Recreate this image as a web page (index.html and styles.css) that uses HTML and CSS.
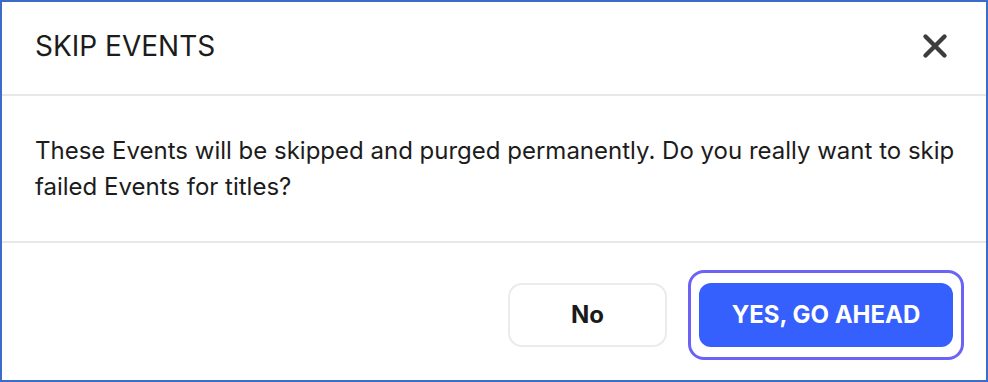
FILE: index.html
```html
<!DOCTYPE html>
<html>
<head>
<meta charset="utf-8">
<link rel="stylesheet" href="styles.css">
</head>
<body>
<div class="dialog">
  <div class="header">
    <h1 class="title">SKIP EVENTS</h1>
    <button class="close" aria-label="Close">
      <svg width="26" height="26" viewBox="0 0 26 26"><path d="M3.5 3.5 L22.5 22.5 M22.5 3.5 L3.5 22.5" stroke="#3d3d3d" stroke-width="4.4" stroke-linecap="round"/></svg>
    </button>
  </div>
  <div class="body">
    <p class="message">These Events will be skipped and purged permanently. Do you really want to skip failed Events for titles?</p>
  </div>
  <div class="footer">
    <button class="btn btn-no">No</button>
    <div class="focus-ring">
      <button class="btn btn-yes">YES, GO AHEAD</button>
    </div>
  </div>
</div>
</body>
</html>
```
FILE: styles.css
```css
* { box-sizing: border-box; }
html, body { margin: 0; padding: 0; background: #fff; }
body { font-family: Inter, "Noto Sans", sans-serif; color: #1c1c1c; }
.dialog {
  width: 988px;
  height: 382px;
  border: 2px solid #3b6cc8;
  display: flex;
  flex-direction: column;
}
.header {
  height: 94px;
  border-bottom: 2px solid #e8e8e8;
  display: flex;
  align-items: center;
  justify-content: space-between;
  padding: 0 38px 4px 33px;
}
.title {
  margin: 0;
  font-size: 28px;
  font-weight: 400;
  color: #1c1c1c;
}
.close {
  border: 0;
  background: none;
  padding: 0;
  display: flex;
  cursor: pointer;
}
.body {
  height: 147px;
  border-bottom: 2px solid #e8e8e8;
  padding: 37px 20px 0 33px;
}
.message {
  margin: 0;
  font-size: 24px;
  line-height: 36px;
  color: #1c1c1c;
}
.footer {
  flex: 1;
  display: flex;
  justify-content: flex-end;
  align-items: center;
  gap: 21px;
  padding: 6px 22px 0 0;
}
.btn {
  font-family: Inter, "Noto Sans", sans-serif;
  font-size: 24px;
  font-weight: 700;
  height: 64px;
  border-radius: 14px;
  cursor: pointer;
}
.btn-no {
  width: 159px;
  background: #fff;
  border: 2px solid #ebebeb;
  color: #1a1a1a;
}
.focus-ring {
  border: 3px solid #6c63f6;
  border-radius: 16px;
  padding: 10px 8px;
  display: flex;
}
.btn-yes {
  width: 254px;
  background: #3560fe;
  border: 0;
  color: #fff;
  border-radius: 12px;
}
```
